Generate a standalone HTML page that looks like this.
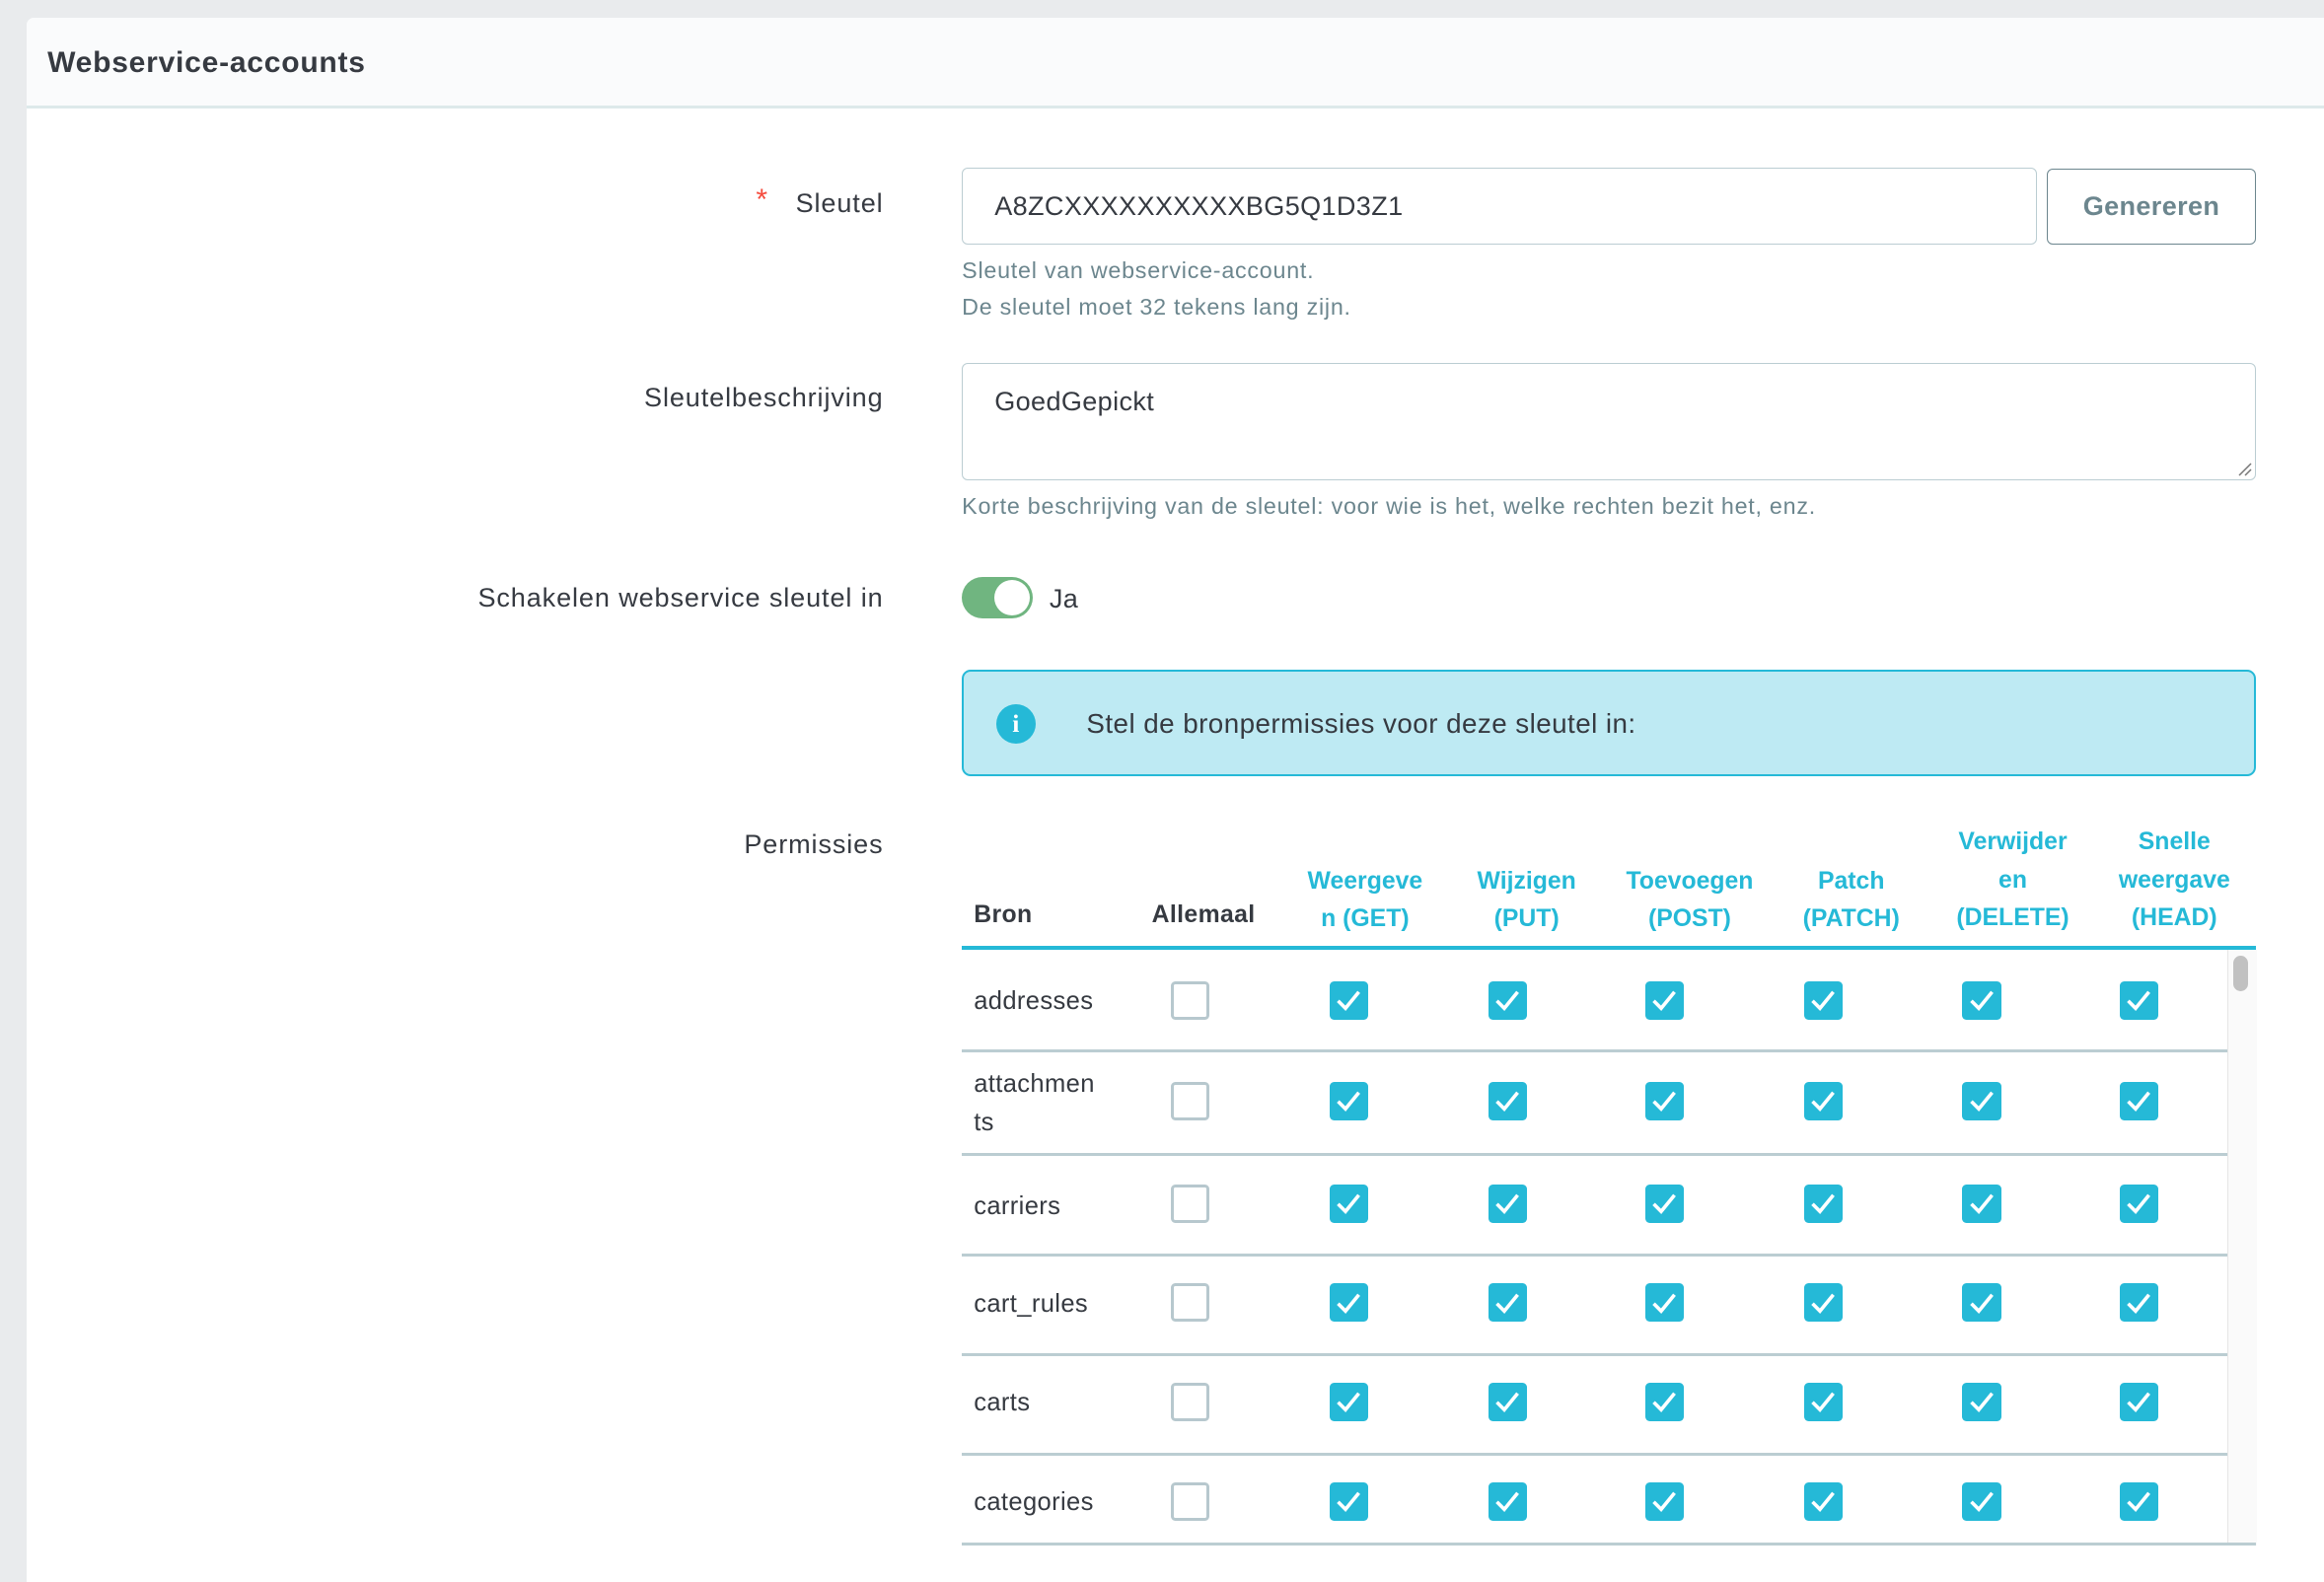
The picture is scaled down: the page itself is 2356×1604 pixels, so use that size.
<!DOCTYPE html>
<html><head><meta charset="utf-8"><style>
html,body{margin:0;padding:0;background:#e9ebed;overflow:hidden}
body{width:2356px;height:1604px}
#w{zoom:1.5026;width:1568px;height:1068px;position:relative;font-family:"Liberation Sans",sans-serif;color:#363a41;letter-spacing:0.25px}
.a{position:absolute}
.panel{left:18px;top:12px;width:1560px;height:1070px;background:#fff;border-radius:5px 0 0 0}
.hd{left:18px;top:12px;width:1560px;height:59px;background:#fafbfc;border-bottom:2px solid #dde9ea;border-radius:5px 0 0 0}
.lbl{right:972px;font-size:18px;white-space:nowrap;letter-spacing:0.6px}
.help{font-size:15.5px;color:#6c868e;left:649px;letter-spacing:0.5px}
.inp{border:1px solid #bbcdd2;border-radius:4px;box-sizing:border-box;background:#fff}
.th{font-size:16.5px;font-weight:bold;color:#25b9d7;text-align:center;line-height:25.5px;width:100px;letter-spacing:0}
.cb{width:22px;height:22px;border-radius:3px;background:#25b9d7}
.cb svg{position:absolute;left:3px;top:3px}
.cbe{width:22px;height:22px;border:2px solid #b7c8ce;border-radius:3px;background:#fff}
.rl{left:649px;width:854px;height:2px;background:#bbcdd2}
.rn{left:657px;font-size:17px;line-height:26px}
</style></head><body><div id="w">
<div class="a panel"></div>
<div class="a hd"></div>
<div class="a" style="left:32px;top:31px;font-size:20px;font-weight:bold;color:#363a41;letter-spacing:0.5px">Webservice-accounts</div>

<div class="a" style="left:510px;top:124px;color:#f54c3e;font-size:20px">*</div>
<div class="a lbl" style="top:127px">Sleutel</div>
<div class="a inp" style="left:649px;top:113px;width:725px;height:52px"></div>
<div class="a" style="left:671px;top:129px;font-size:18px">A8ZCXXXXXXXXXXBG5Q1D3Z1</div>
<div class="a inp" style="left:1381px;top:114px;width:141px;height:51px;border-color:#6c868e"></div>
<div class="a" style="left:1381px;top:129px;width:141px;text-align:center;font-size:18px;color:#6c868e;font-weight:bold">Genereren</div>
<div class="a help" style="top:174px">Sleutel van webservice-account.</div>
<div class="a help" style="top:198px">De sleutel moet 32 tekens lang zijn.</div>

<div class="a lbl" style="top:258px">Sleutelbeschrijving</div>
<div class="a inp" style="left:649px;top:245px;width:873px;height:79px"></div>
<div class="a" style="left:671px;top:261px;font-size:18px">GoedGepickt</div>
<svg class="a" style="left:1509px;top:311px" width="11" height="11"><path d="M10 2L2 10M10 6L6 10" stroke="#777" stroke-width="1"/></svg>
<div class="a help" style="top:333px">Korte beschrijving van de sleutel: voor wie is het, welke rechten bezit het, enz.</div>

<div class="a lbl" style="top:393px">Schakelen webservice sleutel in</div>
<div class="a" style="left:649px;top:389px;width:48px;height:28px;border-radius:14px;background:#70b580"></div>
<div class="a" style="left:671px;top:391px;width:24px;height:24px;border-radius:12px;background:#fff"></div>
<div class="a" style="left:708px;top:394px;font-size:18px">Ja</div>

<div class="a" style="left:649px;top:452px;width:873px;height:72px;box-sizing:border-box;background:#beeaf3;border:1.5px solid #25b9d7;border-radius:6px"></div>
<div class="a" style="left:672px;top:475px;width:27px;height:27px;border-radius:14px;background:#25b9d7;color:#fff;font-weight:bold;font-size:17px;text-align:center;line-height:27px;font-family:'Liberation Serif',serif">i</div>
<div class="a" style="left:733px;top:478px;font-size:18.5px;letter-spacing:0.3px">Stel de bronpermissies voor deze sleutel in:</div>

<div class="a lbl" style="top:560px">Permissies</div>
<div class="a" style="left:657px;top:608px;font-size:16.5px;font-weight:bold">Bron</div>
<div class="a" style="left:762px;top:608px;width:100px;text-align:center;font-size:16.5px;font-weight:bold">Allemaal</div>
<div class="a th" style="left:871px;top:582px">Weergeve<br>n (GET)</div>
<div class="a th" style="left:980px;top:582px">Wijzigen<br>(PUT)</div>
<div class="a th" style="left:1090px;top:582px">Toevoegen<br>(POST)</div>
<div class="a th" style="left:1199px;top:582px">Patch<br>(PATCH)</div>
<div class="a th" style="left:1308px;top:556px">Verwijder<br>en<br>(DELETE)</div>
<div class="a th" style="left:1417px;top:556px">Snelle<br>weergave<br>(HEAD)</div>
<div class="a" style="left:649px;top:638px;width:873px;height:3px;background:#25b9d7"></div>
<div class="a" style="left:1503px;top:641px;width:19px;height:402px;background:#fafafa;border-left:1px solid #e6e6e6"></div>
<div class="a" style="left:1507px;top:645px;width:10px;height:24px;border-radius:5px;background:#c1c1c1"></div>

<div class="a rn" style="top:663px">addresses</div>
<div class="a rn" style="top:719px">attachmen<br>ts</div>
<div class="a rn" style="top:801px">carriers</div>
<div class="a rn" style="top:867px">cart_rules</div>
<div class="a rn" style="top:934px">carts</div>
<div class="a rn" style="top:1001px">categories</div>

<div class="a rl" style="top:708px"></div>
<div class="a rl" style="top:778px"></div>
<div class="a rl" style="top:846px"></div>
<div class="a rl" style="top:913px"></div>
<div class="a rl" style="top:980px"></div>
<div class="a" style="left:649px;top:1041px;width:873px;height:2px;background:#bbcdd2"></div>

<div id="cbs"></div>
<script>
var ys=[675,743,812,879,946,1013],xs=[910,1017,1123,1230,1337,1443],h='';
ys.forEach(function(y){
 h+='<div class="a cbe" style="left:790px;top:'+(y-13)+'px"></div>';
 xs.forEach(function(x){
  h+='<div class="a cb" style="left:'+(x-13)+'px;top:'+(y-13)+'px;width:26px;height:26px"><svg width="20" height="20"><path d="M3 10.5L8 15.5L17 4.5" stroke="#fff" stroke-width="2.4" fill="none"/></svg></div>';
 });
});
document.getElementById('cbs').innerHTML=h;
</script>
</div></body></html>
